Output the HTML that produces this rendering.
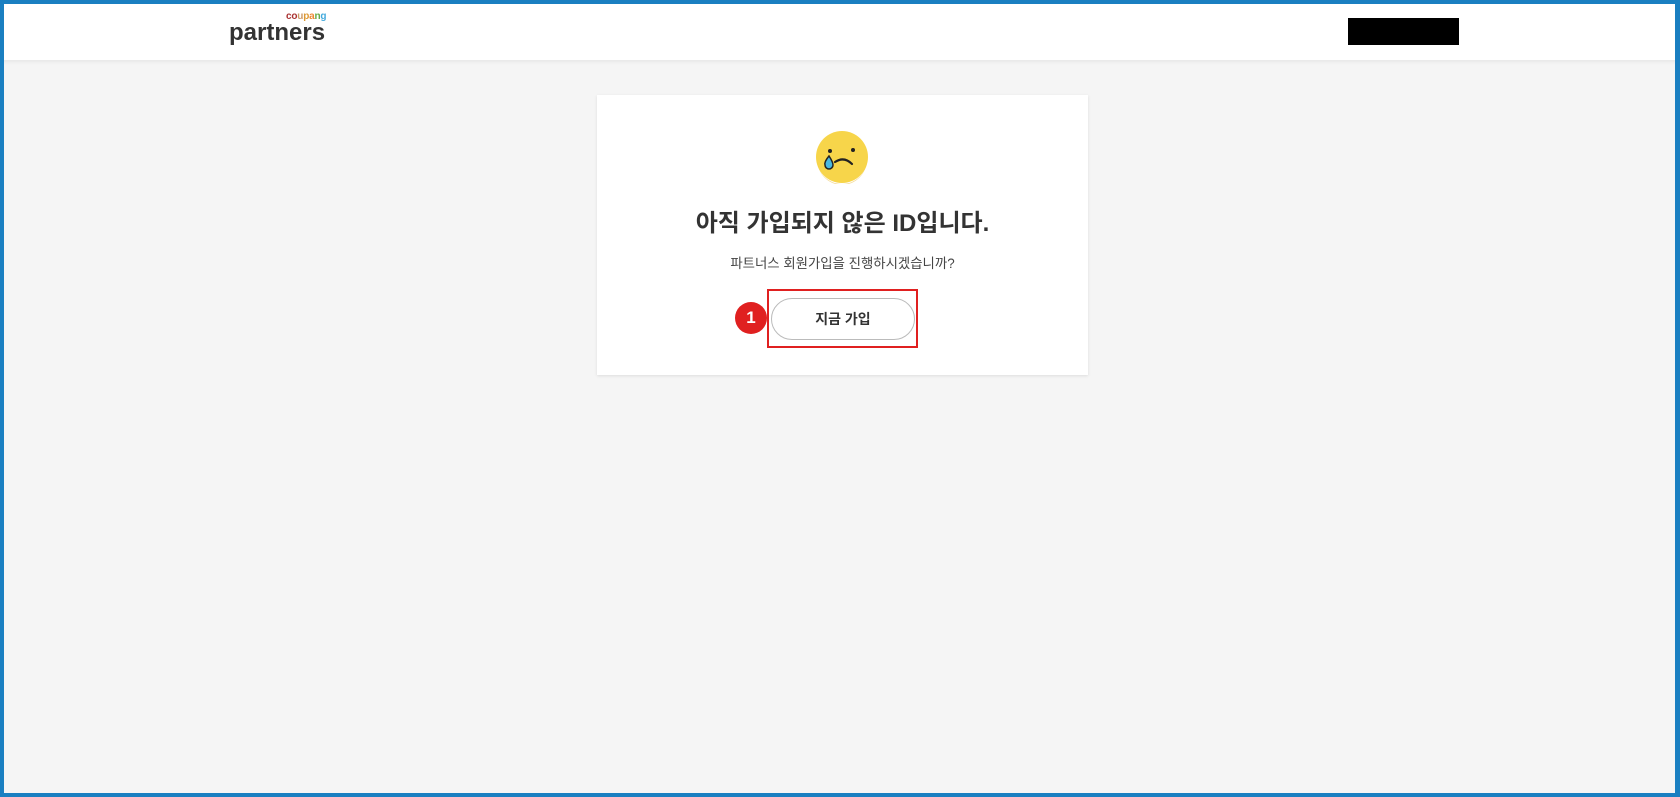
<!DOCTYPE html>
<html><head><meta charset="utf-8"><style>
*{margin:0;padding:0;box-sizing:border-box}
html,body{width:1680px;height:797px;overflow:hidden}
body{background:#f5f5f5;font-family:"Liberation Sans","Noto Sans CJK KR",sans-serif;position:relative}
.frame{position:absolute;inset:0;border:4px solid #1a7fc1;border-right-width:5px;z-index:10;pointer-events:none}
.hdr{position:absolute;left:0;top:0;width:1680px;height:60px;background:#fff;box-shadow:0 2px 4px rgba(0,0,0,.06)}
.logo1{position:absolute;left:286px;top:11px;font-size:10px;font-weight:bold;letter-spacing:-.2px}
.logo2{position:absolute;left:229px;top:20px;font-size:24px;font-weight:bold;color:#333;line-height:26px}
.blk{position:absolute;left:1348px;top:18px;width:111px;height:27px;background:#000}
.card{position:absolute;left:597px;top:95px;width:491px;height:280px;background:#fff;box-shadow:0 1px 3px rgba(0,0,0,.1)}
.t{position:absolute;left:0;width:100%;text-align:center}
.red{position:absolute;left:767px;top:289px;width:151px;height:59px;border:2px solid #e02020}
.btn{position:absolute;left:771px;top:298px;width:144px;height:42px;border:1px solid #bbb;border-radius:21px;background:#fff;text-align:center;line-height:40px;font-size:14px;font-weight:bold;color:#333}
.num{position:absolute;left:735px;top:302px;width:32px;height:32px;border-radius:50%;background:#e02020;color:#fff;font-weight:bold;font-size:17px;text-align:center;line-height:32px}
</style></head><body>
<div class="frame"></div>
<div class="hdr">
<div class="logo1"><span style="color:#a33">co</span><span style="color:#c96">u</span><span style="color:#d93">p</span><span style="color:#e83">a</span><span style="color:#6a4">n</span><span style="color:#4ad">g</span></div>
<div class="logo2">partners</div>
<div class="blk"></div>
</div>
<div class="card">
<svg style="position:absolute;left:218px;top:35px" width="54" height="54" viewBox="0 0 54 54">
<circle cx="27" cy="27" r="26" fill="#f7d54a"/>
<path d="M2 29a25 25 0 0 0 50 0a25 26 0 0 1-50 0z" fill="#e9b93a" opacity=".5"/>
<circle cx="15" cy="21" r="2" fill="#222"/><circle cx="38" cy="20" r="2" fill="#222"/>
<path d="M20 32q9-6 17 2" stroke="#222" stroke-width="2.2" fill="none" stroke-linecap="round"/>
<path d="M14 26q-5 6-4 9a4 4 0 0 0 8 0q0-3-4-9z" fill="#4ab8e0" stroke="#222" stroke-width="1.5"/>
</svg>
<div class="t" style="top:108px;font-size:24px;font-weight:bold;color:#333">아직 가입되지 않은 ID입니다.</div>
<div class="t" style="top:157px;font-size:13.4px;color:#444">파트너스 회원가입을 진행하시겠습니까?</div>
</div>
<div class="btn">지금 가입</div>
<div class="red"></div>
<div class="num">1</div>
</body></html>
